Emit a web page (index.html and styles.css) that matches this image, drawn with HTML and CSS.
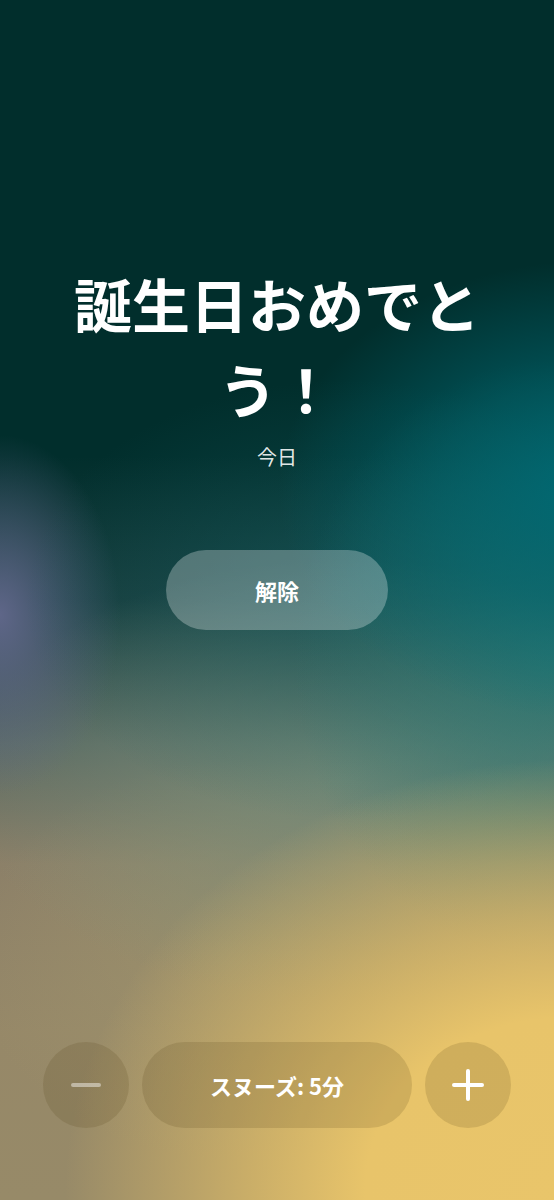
FILE: index.html
```html
<!DOCTYPE html>
<html lang="ja">

<head>
    <meta charset="UTF-8" />
    <meta name="viewport" content="width=device-width, initial-scale=1.0" />
    <title>アラーム</title>
    <link rel="stylesheet" href="styles.css">
</head>

<body>
    <div class="screen">
        <!-- アラーム表示 -->
        <div class="alarm">
            <h1 class="title">誕生日おめでとう！</h1>
            <div class="when">今日</div>
            <button class="stop">解除</button>
        </div>

        <!-- スヌーズ操作 -->
        <div class="snooze">
            <button class="round minus" title="減らす">
                <svg width="30" height="30" viewBox="0 0 30 30">
                    <line x1="2" y1="15" x2="28" y2="15" stroke-width="4" stroke-linecap="round" />
                </svg>
            </button>
            <button class="pill">スヌーズ: 5分</button>
            <button class="round plus" title="増やす">
                <svg width="32" height="32" viewBox="0 0 32 32">
                    <line x1="2" y1="16" x2="30" y2="16" stroke-width="4" stroke-linecap="round" />
                    <line x1="16" y1="2" x2="16" y2="30" stroke-width="4" stroke-linecap="round" />
                </svg>
            </button>
        </div>
    </div>
</body>

</html>
```

FILE: styles.css
```css
:root {
    --btn-light: rgba(255, 255, 255, .28);
    --btn-dark: rgba(80, 60, 20, .16);
}

* {
    box-sizing: border-box;
}

body {
    margin: 0;
    font-family: "Noto Sans CJK JP", "Noto Sans", sans-serif;
    color: #fff;
}

.screen {
    height: 1200px;
    display: flex;
    flex-direction: column;
    align-items: center;
    overflow: hidden;
    background:
        radial-gradient(ellipse 500px 430px at 102% 1190px, #e9c56a 0%, #e8c46a 40%, rgba(222, 188, 104, .7) 64%, rgba(222, 188, 104, 0) 100%),
        radial-gradient(ellipse 320px 230px at 108% 490px, #006a74 0%, rgba(0, 106, 116, .55) 50%, rgba(0, 106, 116, 0) 100%),
        radial-gradient(ellipse 260px 300px at 100% 660px, rgba(40, 125, 120, .75) 0%, rgba(40, 125, 120, 0) 100%),
        radial-gradient(ellipse 320px 220px at 62% 600px, rgba(20, 95, 98, .55) 0%, rgba(20, 95, 98, 0) 100%),
        radial-gradient(ellipse 120px 180px at 0 615px, rgba(98, 104, 140, .95) 0%, rgba(98, 104, 140, 0) 100%),
        radial-gradient(ellipse 380px 220px at 62% 780px, rgba(120, 145, 125, .75) 0%, rgba(120, 145, 125, 0) 100%),
        radial-gradient(ellipse 260px 200px at 42% 960px, rgba(165, 155, 110, .5) 0%, rgba(165, 155, 110, 0) 100%),
        linear-gradient(180deg, #012e2c 0%, #012e2c 38%, #193e3e 50%, #5a6a62 62%, #8c8068 72%, #968868 86%, #978a68 100%);
}

.alarm {
    display: flex;
    flex-direction: column;
    align-items: center;
    padding: 261px 60px 0;
    width: 100%;
}

.title {
    margin: 0;
    font-size: 58px;
    font-weight: 700;
    line-height: 85px;
    text-align: center;
    letter-spacing: 0;
}

.when {
    margin-top: 12px;
    font-size: 20px;
    line-height: 28px;
    color: rgba(255, 255, 255, .9);
}

button {
    font-family: inherit;
    color: #fff;
    border: none;
    cursor: pointer;
    padding: 0;
}

.stop {
    margin-top: 79px;
    width: 222px;
    height: 80px;
    border-radius: 40px;
    background: var(--btn-light);
    font-size: 22px;
    font-weight: 700;
}

.snooze {
    margin-top: auto;
    margin-bottom: 72px;
    display: flex;
    gap: 13px;
}

.round {
    width: 86px;
    height: 86px;
    border-radius: 50%;
    background: var(--btn-dark);
    display: flex;
    align-items: center;
    justify-content: center;
}

.minus svg {
    stroke: rgba(255, 255, 255, .45);
}

.plus svg {
    stroke: #fff;
}

.pill {
    width: 270px;
    height: 86px;
    border-radius: 43px;
    background: var(--btn-dark);
    font-size: 22px;
    font-weight: 700;
}
```
